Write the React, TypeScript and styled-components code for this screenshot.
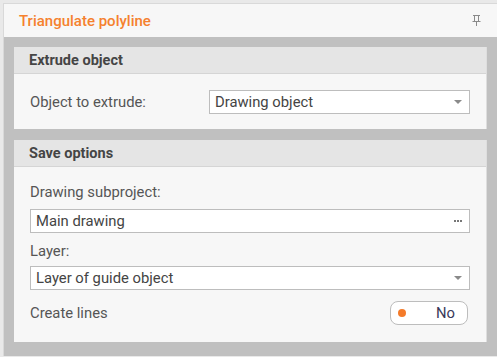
import React from "react";
import styled, { createGlobalStyle } from "styled-components";

const GlobalStyle = createGlobalStyle`
  html, body {
    margin: 0;
    padding: 0;
    background: #e9e9e9;
    font-family: Roboto, "Liberation Sans", sans-serif;
  }
`;

const Window = styled.div`
  margin: 3px 0 0 3px;
  width: 494px;
  border-top: 1px solid #d9d9d9;
  border-left: 1px solid #d9d9d9;
  background: #c0c0c0;
`;

const Header = styled.div`
  height: 33px;
  background: #f7f7f7;
  display: flex;
  align-items: center;
  justify-content: space-between;
  padding: 0 17px 0 15px;
`;

const Title = styled.span`
  color: #f5812e;
  font-size: 15px;
  font-weight: 500;
`;

const Body = styled.div`
  display: flex;
  flex-direction: column;
  gap: 11px;
  padding: 10px 11px 14px 10px;
`;

const Section = styled.div`
  background: #f7f7f7;
  border-right: 1px solid #dedede;
`;

const SectionHeader = styled.div`
  height: 26px;
  background: #e5e5e5;
  border-bottom: 1px solid #d5d5d5;
  display: flex;
  align-items: center;
  padding-left: 15px;
  color: #454545;
  font-size: 14.5px;
  font-weight: 700;
`;

const Row = styled.div`
  display: flex;
  align-items: center;
  justify-content: space-between;
  padding: 16px 16px 15px 16px;
`;

const Stack = styled.div`
  display: flex;
  flex-direction: column;
  padding: 15px 16px 17px 16px;
`;

const Label = styled.div<{ $mt?: number; $mb?: number }>`
  color: #555;
  font-size: 14.8px;
  line-height: 20px;
  margin-top: ${(p) => p.$mt ?? 0}px;
  margin-bottom: ${(p) => p.$mb ?? 0}px;
`;

const Field = styled.div<{ $width?: number }>`
  box-sizing: border-box;
  height: 24px;
  width: ${(p) => (p.$width ? `${p.$width}px` : "100%")};
  background: #fff;
  border: 1px solid #bdbdbd;
  display: flex;
  align-items: center;
  justify-content: space-between;
  padding: 0 6px 0 5px;
  color: #444;
  font-size: 14.8px;
`;

const Caret = styled.span`
  width: 0;
  height: 0;
  border-left: 4px solid transparent;
  border-right: 4px solid transparent;
  border-top: 4px solid #8a8a8a;
  margin-right: 1px;
`;

const Dots = styled.span`
  display: flex;
  gap: 1px;
  margin-right: 1px;
`;

const DotSmall = styled.span`
  width: 2px;
  height: 2px;
  background: #777;
`;

const ToggleRow = styled.div`
  display: flex;
  align-items: center;
  justify-content: space-between;
  margin-top: 11px;
  padding-right: 2px;
`;

const Toggle = styled.div`
  box-sizing: border-box;
  width: 78px;
  height: 24px;
  border: 1px solid #bdbdbd;
  border-radius: 8px;
  background: #fff;
  display: flex;
  align-items: center;
  justify-content: space-between;
  padding: 0 12px 0 7px;
  color: #3a3a5a;
  font-size: 14.8px;
`;

const Dot = styled.span`
  width: 8px;
  height: 8px;
  border-radius: 50%;
  background: #f47b2a;
`;

const PinIcon = () => (
  <svg width="9" height="11" viewBox="0 0 9 11">
    <g stroke="#8a8a8a" strokeWidth="1" fill="none">
      <line x1="1" y1="0.5" x2="8" y2="0.5" />
      <line x1="2.5" y1="1" x2="2.5" y2="6" />
      <line x1="6.5" y1="1" x2="6.5" y2="6" />
      <line x1="0.5" y1="6.5" x2="8.5" y2="6.5" />
      <line x1="4.5" y1="7" x2="4.5" y2="11" />
    </g>
  </svg>
);

export default function App() {
  return (
    <>
      <GlobalStyle />
      <Window>
        <Header>
          <Title>Triangulate polyline</Title>
          <PinIcon />
        </Header>
        <Body>
          <Section>
            <SectionHeader>Extrude object</SectionHeader>
            <Row>
              <Label>Object to extrude:</Label>
              <Field $width={261}>
                Drawing object
                <Caret />
              </Field>
            </Row>
          </Section>
          <Section>
            <SectionHeader>Save options</SectionHeader>
            <Stack>
              <Label $mb={7}>Drawing subproject:</Label>
              <Field>
                Main drawing
                <Dots>
                  <DotSmall />
                  <DotSmall />
                  <DotSmall />
                </Dots>
              </Field>
              <Label $mt={8} $mb={5}>
                Layer:
              </Label>
              <Field>
                Layer of guide object
                <Caret />
              </Field>
              <ToggleRow>
                <Label>Create lines</Label>
                <Toggle>
                  <Dot />
                  No
                </Toggle>
              </ToggleRow>
            </Stack>
          </Section>
        </Body>
      </Window>
    </>
  );
}
